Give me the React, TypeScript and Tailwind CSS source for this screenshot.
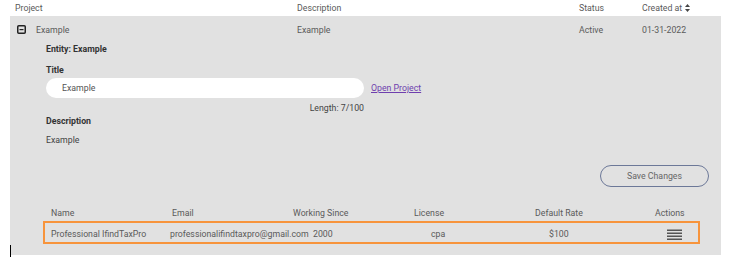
import React from 'react';

const COLS = 'grid grid-cols-[282px_282px_63px_1fr]';
const SUB_COLS = 'grid grid-cols-[121px_121px_121px_121px_120px_1fr]';

function MinusSquare() {
  return (
    <svg width="9" height="9" viewBox="0 0 9 9" className="shrink-0">
      <rect x="0.75" y="0.75" width="7.5" height="7.5" rx="1" fill="none" stroke="#222" strokeWidth="1.5" />
      <rect x="2.5" y="4" width="4" height="1.2" fill="#222" />
    </svg>
  );
}

function SortIcon() {
  return (
    <svg width="5" height="8" viewBox="0 0 5 8" className="ml-[3px] inline-block">
      <path d="M2.5 0 L5 3 L0 3 Z" fill="#444" />
      <path d="M2.5 8 L5 5 L0 5 Z" fill="#444" />
    </svg>
  );
}

function Hamburger() {
  return (
    <svg width="15" height="11" viewBox="0 0 15 11">
      <rect x="0" y="0.5" width="15" height="1.5" fill="#555" />
      <rect x="0" y="3.5" width="15" height="1.5" fill="#555" />
      <rect x="0" y="6.5" width="15" height="1.5" fill="#555" />
      <rect x="0" y="9.5" width="15" height="1.5" fill="#555" />
    </svg>
  );
}

export default function App() {
  return (
    <div className="relative h-[257px] w-[729px] overflow-hidden bg-white font-['Roboto',sans-serif] text-[8.75px] leading-[12px] text-[#5a5a5a]">
      {/* table header */}
      <div className={`${COLS} ml-[15px] h-[16px] items-center`}>
        <span>Project</span>
        <span>Description</span>
        <span>Status</span>
        <span className="flex items-center">
          Created at
          <SortIcon />
        </span>
      </div>

      {/* expanded row */}
      <div className="ml-[10px] flex h-[239px] w-[711px] flex-col bg-[#e1e1e1]">
        <div className={`${COLS} h-[27px] items-center pl-[5px]`}>
          <span className="flex items-center gap-[10px] pl-[2px]">
            <MinusSquare />
            Example
          </span>
          <span>Example</span>
          <span>Active</span>
          <span>01-31-2022</span>
        </div>

        <div className="flex flex-col pl-[36px]">
          <span className="font-bold text-[#333]">Entity: Example</span>
          <span className="mt-[9px] font-bold text-[#333]">Title</span>
          <div className="mt-[2px] flex items-center">
            <div className="flex h-[20px] w-[318px] items-center rounded-full bg-white pl-[16px] text-[#555]">
              Example
            </div>
            <a className="ml-[7px] text-[#6f3fae] underline">Open Project</a>
          </div>
          <span className="mt-[4px] w-[318px] text-right text-[#444]">Length: 7/100</span>
          <span className="mt-[1px] font-bold text-[#333]">Description</span>
          <span className="mt-[7px] text-[#444]">Example</span>
        </div>

        <div className="mt-[19px] flex justify-end pr-[12px]">
          <button className="flex h-[22px] w-[109px] items-center justify-center rounded-full border border-[#6c7898] text-[#666]">
            Save Changes
          </button>
        </div>

        <div className={`${SUB_COLS} ml-[41px] mt-[20px]`}>
          <span>Name</span>
          <span>Email</span>
          <span>Working Since</span>
          <span>License</span>
          <span>Default Rate</span>
          <span>Actions</span>
        </div>

        <div className={`${SUB_COLS} ml-[33px] mt-[2px] h-[23px] w-[657px] items-center border-2 border-[#f7943c] pl-[6px] pt-[3px]`}>
          <span className="whitespace-nowrap">Professional IfindTaxPro</span>
          <span className="-ml-[2px] whitespace-nowrap">professionalifindtaxpro@gmail.com</span>
          <span className="ml-[20px]">2000</span>
          <span className="ml-[17px]">cpa</span>
          <span className="ml-[14px]">$100</span>
          <span className="ml-[12px] flex">
            <Hamburger />
          </span>
        </div>
      </div>

      {/* text caret */}
      <div className="absolute left-[10px] top-[245px] h-[12px] w-px bg-black" />
    </div>
  );
}
